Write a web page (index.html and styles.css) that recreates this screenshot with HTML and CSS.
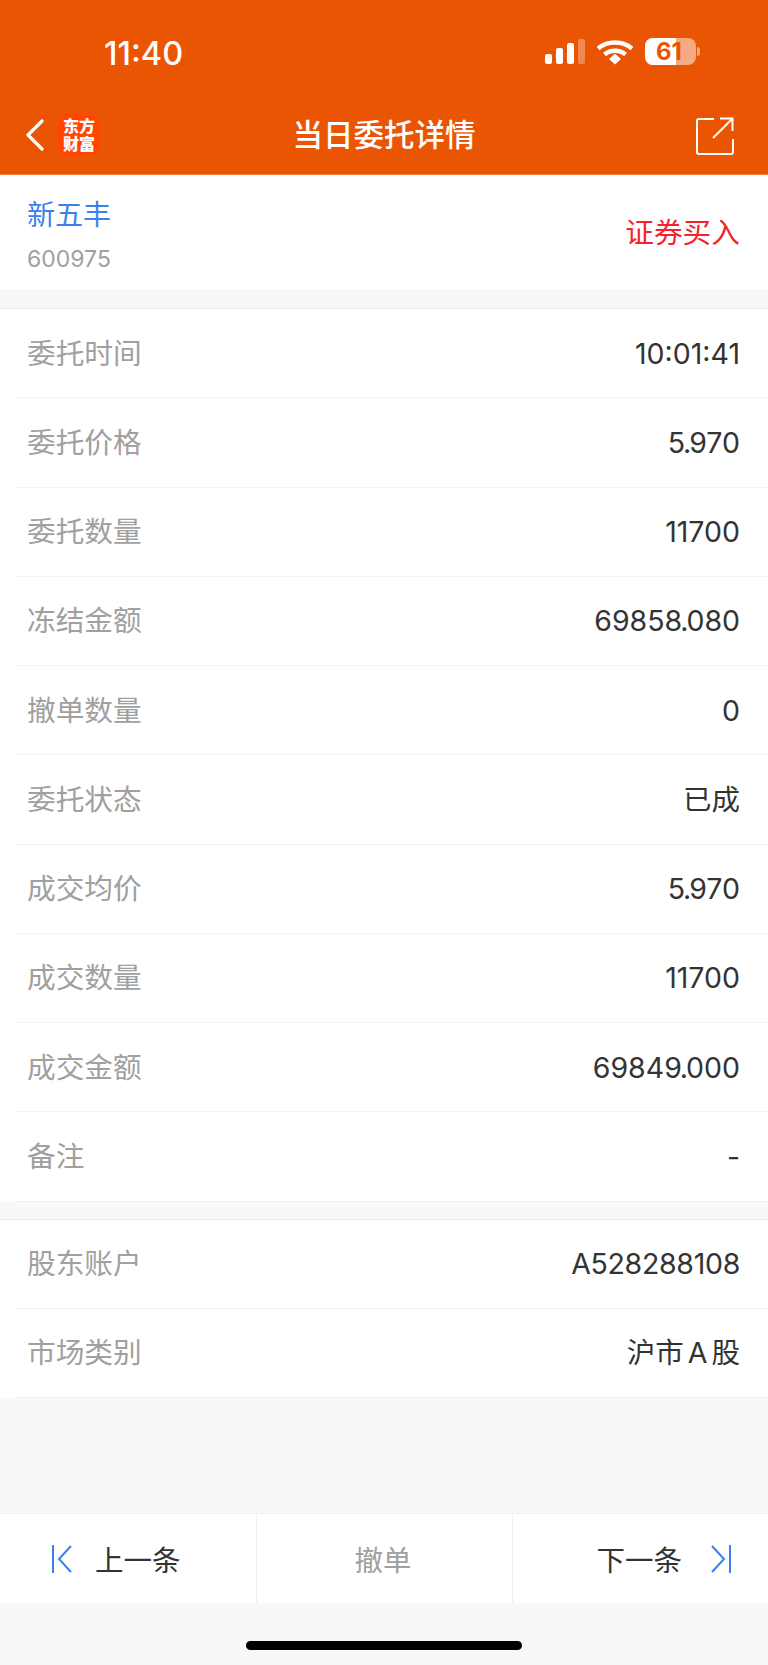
FILE: index.html
```html
<!DOCTYPE html>
<html lang="zh-CN">
  <head>
    <meta charset="UTF-8" />
    <title>当日委托详情</title>
    <link rel="stylesheet" href="styles.css">
  </head>
  <body>
    <header class="topbar">
      <div class="status-bar">
        <span class="clock">11:40</span>
        <div class="status-icons">
          <svg class="signal" width="40" height="26" viewBox="0 0 40 26">
            <rect x="0" y="15" width="7" height="10" rx="2" fill="#fff" />
            <rect x="11" y="9" width="7" height="16" rx="2" fill="#fff" />
            <rect x="22" y="4" width="7" height="21" rx="2" fill="#fff" />
            <rect x="33" y="0" width="7" height="25" rx="2" fill="#fff" fill-opacity="0.3" />
          </svg>
          <svg class="wifi" width="36" height="26" viewBox="0 0 36 26">
            <path d="M1 9.500C10.500 1.500 25.500 1.500 35 9.500" fill="none" stroke="#fff" stroke-width="4.500" />
            <path d="M7.500 15.500C13.500 10.500 22.500 10.500 28.500 15.500" fill="none" stroke="#fff" stroke-width="4.500" />
            <path d="M12 20L18 14.800L24 20L18 25.500Z" fill="#fff" />
          </svg>
          <div class="battery">
            <div class="battery-body">
              <div class="battery-fill"></div>
              <span class="battery-num">61</span>
            </div>
            <div class="battery-nub"></div>
          </div>
        </div>
      </div>
      <nav class="navbar">
        <div class="nav-left">
          <svg width="18" height="32" viewBox="0 0 18 32">
            <path d="M16 2L2 16L16 30" fill="none" stroke="#fff" stroke-width="3.200" stroke-linecap="round" stroke-linejoin="round" />
          </svg>
          <div class="logo">东方<br />财富</div>
        </div>
        <h1 class="nav-title">当日委托详情</h1>
        <svg class="share" width="38" height="38" viewBox="0 0 38 38">
          <path d="M18 2H3Q1 2 1 4V35Q1 37 3 37H35Q37 37 37 35V22" fill="none" stroke="#fff" stroke-width="2" />
          <path d="M17 21L36 2M24 1.500H36.500V14" fill="none" stroke="#fff" stroke-width="2" />
        </svg>
      </nav>
    </header>

    <section class="stock card">
      <div>
        <div class="stock-name">新五丰</div>
        <div class="stock-code">600975</div>
      </div>
      <div class="stock-side">证券买入</div>
    </section>

    <section class="card list">
      <div class="row"><span class="label">委托时间</span><span class="value">10:01:41</span></div>
      <div class="row"><span class="label">委托价格</span><span class="value">5<span class="dot">.</span>970</span></div>
      <div class="row"><span class="label">委托数量</span><span class="value">11700</span></div>
      <div class="row"><span class="label">冻结金额</span><span class="value">69858<span class="dot">.</span>080</span></div>
      <div class="row"><span class="label">撤单数量</span><span class="value">0</span></div>
      <div class="row"><span class="label">委托状态</span><span class="value value-cn">已成</span></div>
      <div class="row"><span class="label">成交均价</span><span class="value">5<span class="dot">.</span>970</span></div>
      <div class="row"><span class="label">成交数量</span><span class="value">11700</span></div>
      <div class="row"><span class="label">成交金额</span><span class="value">69849<span class="dot">.</span>000</span></div>
      <div class="row"><span class="label">备注</span><span class="value">-</span></div>
    </section>

    <section class="card list">
      <div class="row"><span class="label">股东账户</span><span class="value value-tight">A528288108</span></div>
      <div class="row"><span class="label">市场类别</span><span class="value value-cn value-market">沪市 A 股</span></div>
    </section>

    <footer class="actions">
      <div class="action action-prev">
        <svg width="20" height="28" viewBox="0 0 20 28">
          <path d="M1 0V28M19 1L7 14L19 27" fill="none" stroke="#3a82e8" stroke-width="2" />
        </svg>
        <span>上一条</span>
      </div>
      <div class="action action-cancel">撤单</div>
      <div class="action action-next">
        <span>下一条</span>
        <svg width="20" height="28" viewBox="0 0 20 28">
          <path d="M19 0V28M1 1L13 14L1 27" fill="none" stroke="#3a82e8" stroke-width="2" />
        </svg>
      </div>
    </footer>

    <div class="home-area"><div class="home-bar"></div></div>
  </body>
</html>
```

FILE: styles.css
```css
* {
  box-sizing: border-box;
}

html,
body {
  margin: 0;
  height: 100%;
}

body {
  width: 768px;
  height: 1665px;
  overflow: hidden;
  display: flex;
  flex-direction: column;
  background-color: #f7f8fa;
  color: #333;
  font-family: Inter, "Noto Sans CJK SC", sans-serif;
}

.topbar {
  height: 175px;
  background-color: #ea5504;
  border-bottom: 1px solid #f08040;
  color: #fff;
}

.status-bar {
  height: 100px;
  display: flex;
  justify-content: space-between;
  padding: 40px 68px 0 104px;
}

.clock {
  font-size: 32.500px;
  font-weight: 500;
  line-height: 28px;
}

.status-icons {
  display: flex;
  gap: 12px;
  height: 27px;
  align-items: flex-start;
  margin-top: -2px;
}

.signal {
  margin-top: 1px;
}

.wifi {
  margin-top: 1px;
}

.battery {
  display: flex;
  align-items: center;
  gap: 1px;
}

.battery-body {
  position: relative;
  width: 51px;
  height: 27px;
  border-radius: 8px;
  overflow: hidden;
  background-color: rgba(255, 255, 255, 0.5);
}

.battery-fill {
  width: 31px;
  height: 100%;
  background-color: #fff;
}

.battery-num {
  position: absolute;
  left: 11px;
  top: 0;
  font-size: 24px;
  font-weight: 700;
  line-height: 27px;
  color: #ea5504;
}

.battery-nub {
  width: 3px;
  height: 9px;
  border-radius: 0 3px 3px 0;
  background-color: rgba(255, 255, 255, 0.5);
}

.navbar {
  height: 74px;
  display: flex;
  align-items: flex-start;
  justify-content: space-between;
  padding: 17px 34px 0 26px;
  position: relative;
}

.nav-left {
  display: flex;
  align-items: center;
  gap: 14px;
  margin-top: -3px;
}

.logo {
  width: 42px;
  height: 42px;
  border-radius: 10px;
  background-color: #ff4500;
  font-size: 16px;
  font-weight: 900;
  line-height: 18px;
  text-align: center;
  padding-top: 3px;
}

.nav-title {
  position: absolute;
  left: 0;
  right: 0;
  top: 15px;
  margin: 0;
  text-align: center;
  font-size: 30.500px;
  font-weight: 500;
  line-height: 40px;
}

.card {
  background-color: #fff;
}

.stock {
  height: 116px;
  display: flex;
  justify-content: space-between;
  align-items: center;
  padding: 0 28px 0 27px;
  border-bottom: 1px solid #f0f1f4;
}

.stock-name {
  font-size: 28px;
  line-height: 40px;
  color: #3a82e8;
  margin-top: 4px;
}

.stock-code {
  margin-top: 9px;
  font-size: 23px;
  line-height: 30px;
  color: #a0a0a0;
}

.stock-side {
  font-size: 28.700px;
  color: #f5222d;
  margin-bottom: 4px;
}

.list {
  margin-top: 17px;
  border-top: 1px solid #ececef;
}

.row {
  height: 89.250px;
  display: flex;
  justify-content: space-between;
  align-items: center;
  margin-left: 16px;
  padding-right: 28px;
  padding-left: 11px;
  border-bottom: 1px solid #f2f2f4;
  font-size: 28.500px;
}

.label {
  font-size: 28.700px;
  color: #a0a0a0;
  margin-bottom: 4px;
}

.value {
  color: #333;
}

.value-cn {
  margin-bottom: 4px;
}

.value-tight {
  letter-spacing: -0.300px;
}

.value-market {
  word-spacing: -4px;
}

.dot {
  margin: 0 -2px;
}

.actions {
  margin-top: auto;
  height: 90px;
  display: flex;
  background-color: #fff;
  border-top: 1px solid #f0f1f3;
  font-size: 28.500px;
}

.action {
  display: flex;
  align-items: center;
}

.action-prev {
  width: 256px;
  padding-left: 52px;
  gap: 23px;
}

.action-cancel {
  width: 257px;
  justify-content: center;
  color: #a0a0a0;
  border-left: 1px solid #f0f0f2;
  border-right: 1px solid #f0f0f2;
  padding-right: 3px;
}

.action-next {
  width: 255px;
  padding-right: 37px;
  justify-content: flex-end;
  gap: 29px;
}

.home-area {
  height: 62px;
  padding-top: 38px;
}

.home-bar {
  width: 276px;
  height: 9px;
  margin: 0 auto;
  border-radius: 5px;
  background-color: #000;
}
```
